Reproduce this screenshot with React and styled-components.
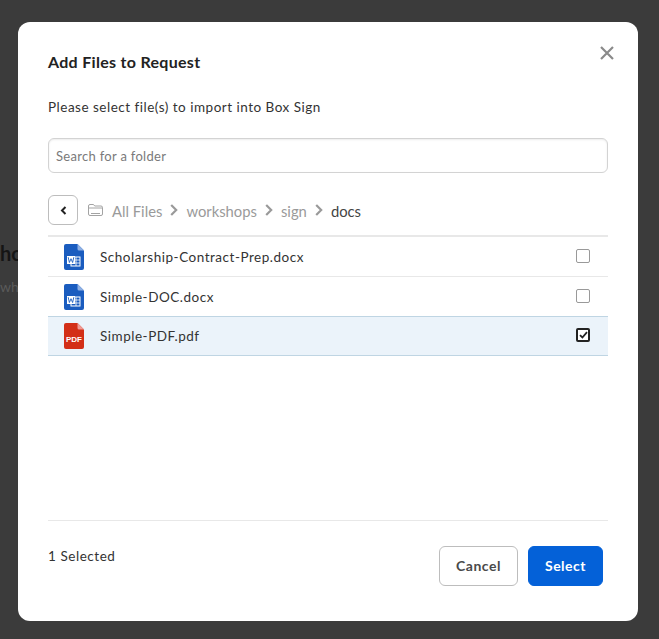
import React from "react";
import styled, { createGlobalStyle } from "styled-components";

const files = [
  { name: "Scholarship-Contract-Prep.docx", type: "word" },
  { name: "Simple-DOC.docx", type: "word" },
  { name: "Simple-PDF.pdf", type: "pdf", selected: true },
];

const crumbs = ["All Files", "workshops", "sign"];

const WordIcon = () => (
  <svg width="20" height="26" viewBox="0 0 20 26">
    <path d="M2 0h11.500L20 6.500V24a2 2 0 0 1-2 2H2a2 2 0 0 1-2-2V2a2 2 0 0 1 2-2z" fill="#1a5cbf" />
    <path d="M13.500 0L20 6.500h-5a1.500 1.500 0 0 1-1.500-1.500z" fill="#8fb0e3" />
    <rect x="7" y="13" width="9" height="9" fill="none" stroke="#fff" strokeWidth="1" />
    <path d="M7 16h9M7 19h9M12 13v9" stroke="#fff" strokeWidth="0.8" />
    <rect x="3" y="12" width="8" height="8" fill="#fff" />
    <path d="M4.200 13.200l1.200 5.300 1.600-3.800 1.600 3.800 1.200-5.300" fill="none" stroke="#1a5cbf" strokeWidth="0.9" />
  </svg>
);

const PdfIcon = () => (
  <svg width="20" height="26" viewBox="0 0 20 26">
    <path d="M2 0h11.500L20 6.500V24a2 2 0 0 1-2 2H2a2 2 0 0 1-2-2V2a2 2 0 0 1 2-2z" fill="#d32f17" />
    <path d="M13.500 0L20 6.500h-5a1.500 1.500 0 0 1-1.500-1.500z" fill="#f09a93" />
    <text x="10" y="18.500" textAnchor="middle" fontFamily="'Liberation Sans', sans-serif" fontWeight="700" fontSize="8" fill="#fff">
      PDF
    </text>
  </svg>
);

const FolderIcon = () => (
  <svg width="15" height="12" viewBox="0 0 15 12" fill="none" stroke="#a3a3a3" strokeWidth="1">
    <path d="M.5 2A1.500 1.500 0 0 1 2 .5h3.500l1.200 1.500H13A1.500 1.500 0 0 1 14.500 3.500V10A1.500 1.500 0 0 1 13 11.500H2A1.500 1.500 0 0 1 .5 10z" />
    <path d="M.5 4h14M3 9.500h9" />
  </svg>
);

const Chevron = () => (
  <svg width="8" height="12" viewBox="0 0 8 12" fill="none" stroke="#9a9a9a" strokeWidth="2.200">
    <path d="M1.200 1l5 5-5 5" />
  </svg>
);

const BackChevron = () => (
  <svg width="7" height="9" viewBox="0 0 7 9" fill="none" stroke="#222" strokeWidth="2">
    <path d="M5.500 1L2 4.500 5.500 8" />
  </svg>
);

const CloseIcon = () => (
  <svg width="14" height="14" viewBox="0 0 14 14" fill="none" stroke="#8a8a8a" strokeWidth="2.200">
    <path d="M1 1l12 12M13 1L1 13" />
  </svg>
);

export default function App() {
  return (
    <>
      <GlobalStyle />
      <Page>
        <BehindHeading>ho</BehindHeading>
        <BehindText>whe</BehindText>
        <Overlay>
          <Dialog>
            <CloseButton aria-label="Close">
              <CloseIcon />
            </CloseButton>
            <Title>Add Files to Request</Title>
            <Description>Please select file(s) to import into Box Sign</Description>
            <SearchInput placeholder="Search for a folder" />
            <CrumbRow>
              <BackButton aria-label="Back">
                <BackChevron />
              </BackButton>
              <FolderSlot>
                <FolderIcon />
              </FolderSlot>
              {crumbs.map((c) => (
                <React.Fragment key={c}>
                  <Crumb>{c}</Crumb>
                  <Chevron />
                </React.Fragment>
              ))}
              <Crumb $current>docs</Crumb>
            </CrumbRow>
            <FileList>
              {files.map((f) => (
                <FileRow key={f.name} $selected={f.selected}>
                  <IconSlot>{f.type === "pdf" ? <PdfIcon /> : <WordIcon />}</IconSlot>
                  <FileName>{f.name}</FileName>
                  <Checkbox $checked={f.selected}>
                    {f.selected && (
                      <svg width="9" height="8" viewBox="0 0 9 8" fill="none" stroke="#222" strokeWidth="1.800">
                        <path d="M1 4.200l2.400 2.300L8 1.200" />
                      </svg>
                    )}
                  </Checkbox>
                </FileRow>
              ))}
            </FileList>
            <Footer>
              <Count>1 Selected</Count>
              <Actions>
                <CancelButton>Cancel</CancelButton>
                <SelectButton>Select</SelectButton>
              </Actions>
            </Footer>
          </Dialog>
        </Overlay>
      </Page>
    </>
  );
}

const GlobalStyle = createGlobalStyle`
  html, body {
    margin: 0;
    padding: 0;
    background: #3b3b3b;
    font-family: Lato, "Liberation Sans", sans-serif;
  }
`;

const Page = styled.div`
  position: relative;
  width: 659px;
  height: 639px;
  overflow: hidden;
  background: #3b3b3b;
  padding-top: 240px;
  box-sizing: border-box;
`;

const BehindHeading = styled.div`
  font-size: 20px;
  line-height: 26px;
  font-weight: 700;
  color: #151515;
`;

const BehindText = styled.div`
  margin-top: 12px;
  font-size: 14px;
  line-height: 18px;
  color: #5a5a5a;
`;

const Overlay = styled.div`
  position: absolute;
  inset: 0;
  display: flex;
  justify-content: flex-start;
  padding: 22px 0 0 18px;
`;

const Dialog = styled.div`
  position: relative;
  width: 620px;
  height: 599px;
  box-sizing: border-box;
  padding: 30px;
  background: #fff;
  border-radius: 12px;
  display: flex;
  flex-direction: column;
`;

const CloseButton = styled.button`
  position: absolute;
  top: 24px;
  right: 24px;
  width: 14px;
  height: 14px;
  padding: 0;
  border: 0;
  background: none;
  display: flex;
`;

const Title = styled.h2`
  margin: 0;
  font-size: 16px;
  line-height: 20px;
  font-weight: 700;
  letter-spacing: 0.3px;
  color: #222;
`;

const Description = styled.p`
  margin: 25px 0 0;
  font-size: 13.500px;
  line-height: 20px;
  letter-spacing: 0.5px;
  color: #333;
`;

const SearchInput = styled.input`
  margin-top: 21px;
  width: 100%;
  height: 35px;
  box-sizing: border-box;
  padding: 0 7px;
  border: 1px solid #d3d3d3;
  border-radius: 6px;
  box-shadow: inset 0 1px 2px rgba(0, 0, 0, 0.08);
  font-family: inherit;
  font-size: 13px;
  letter-spacing: 0.3px;
  outline: none;

  &::placeholder {
    color: #7a7a7a;
    opacity: 1;
  }
`;

const CrumbRow = styled.div`
  margin-top: 22px;
  display: flex;
  align-items: center;
  height: 30px;
  gap: 8px;
`;

const BackButton = styled.button`
  width: 30px;
  height: 30px;
  padding: 0;
  border: 1px solid #bdbdbd;
  border-radius: 6px;
  background: #fff;
  display: flex;
  align-items: center;
  justify-content: center;
  margin-right: 2px;
`;

const FolderSlot = styled.span`
  display: flex;
  margin-right: 1px;
`;

const Crumb = styled.span`
  padding-top: 1px;
  font-size: 14.800px;
  line-height: 20px;
  color: ${(p) => (p.$current ? "#444" : "#9a9a9a")};
`;

const FileList = styled.div`
  margin-top: 10px;
  border-top: 2px solid #e8e8e8;
`;

const FileRow = styled.div`
  display: flex;
  align-items: center;
  box-sizing: border-box;
  height: 40px;
  padding: 0 18px 0 16px;
  margin-top: ${(p) => (p.$selected ? "-1px" : "0")};
  border-bottom: 1px solid ${(p) => (p.$selected ? "#bfd5e3" : "#e8e8e8")};
  border-top: ${(p) => (p.$selected ? "1px solid #bfd5e3" : "0")};
  background: ${(p) => (p.$selected ? "#ebf3fa" : "#fff")};
`;

const IconSlot = styled.span`
  display: flex;
  width: 20px;
  margin-right: 16px;
`;

const FileName = styled.span`
  flex: 1;
  font-size: 13.500px;
  letter-spacing: 0.52px;
  color: #333;
`;

const Checkbox = styled.span`
  width: 14px;
  height: 14px;
  margin-top: -2px;
  box-sizing: border-box;
  border: ${(p) => (p.$checked ? "2px solid #222" : "1px solid #999")};
  border-radius: 2px;
  background: #fff;
  display: flex;
  align-items: center;
  justify-content: center;
`;

const Footer = styled.div`
  margin-top: auto;
  height: 71px;
  box-sizing: border-box;
  border-top: 1px solid #e8e8e8;
  padding: 25px 5px 0 0;
  display: flex;
  justify-content: space-between;
  align-items: flex-start;
`;

const Count = styled.span`
  font-size: 13.500px;
  line-height: 20px;
  letter-spacing: 0.55px;
  color: #333;
`;

const Actions = styled.div`
  display: flex;
  gap: 10px;
`;

const CancelButton = styled.button`
  width: 79px;
  height: 40px;
  padding: 0 0 2px;
  border: 1px solid #bdbdbd;
  border-radius: 6px;
  background: #fff;
  color: #4a4a4a;
  font-family: inherit;
  font-size: 14px;
  font-weight: 700;
  letter-spacing: 0.5px;
`;

const SelectButton = styled(CancelButton)`
  width: 75px;
  border-color: #0461d8;
  background: #0461d8;
  color: #fff;
`;
